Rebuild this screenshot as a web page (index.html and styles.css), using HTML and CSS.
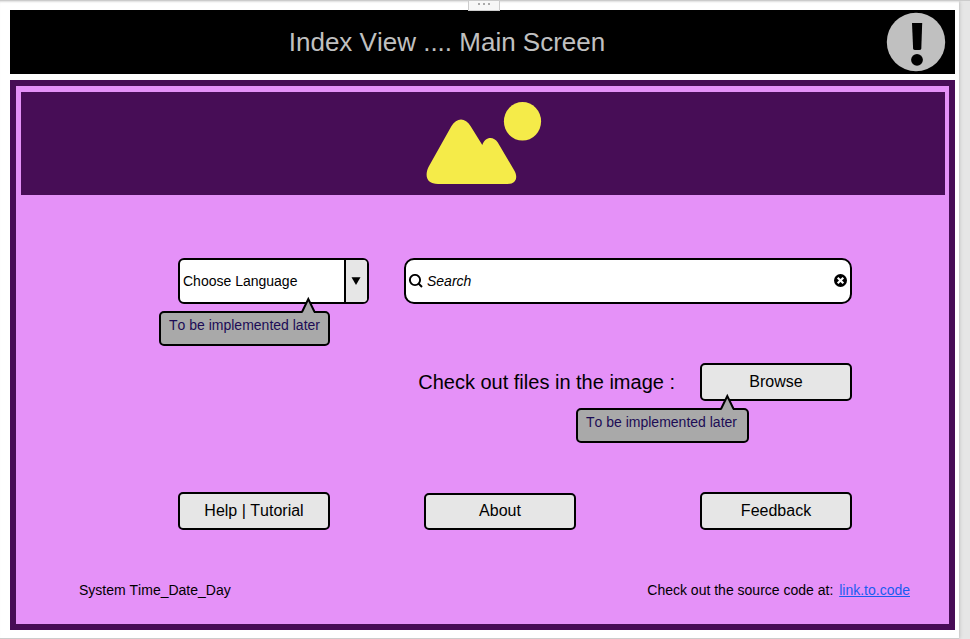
FILE: index.html
```html
<!DOCTYPE html>
<html lang="en">
<head>
<meta charset="utf-8">
<title>Index View</title>
<link rel="stylesheet" href="styles.css">
</head>
<body>
<div class="canvas">
  <div class="handle"><i></i><i></i><i></i></div>
  <header class="titlebar">
    <h1>Index View .... Main Screen</h1>
    <svg class="alert" viewBox="0 0 60 60"><circle cx="30" cy="30" r="29.200" fill="#c0c0c0"/><path d="M26 11h10.200l-.9 25.500q-.2 1.500-2 1.500h-4.200q-1.800 0-2-1.500z"/><circle cx="31" cy="47.800" r="5.900"/></svg>
  </header>
  <main class="panel">
    <div class="hero">
      <svg class="picture" viewBox="0 0 116 84" fill="#f5eb49"><ellipse cx="96.500" cy="19.300" rx="18.600" ry="19.300"/><path d="M25.500 24C30.500 15.300 39.500 15.300 44.500 24L56.300 43C59 34.500 67.500 33.700 71.800 40.500L88 68C92.500 75 90 82 82 82H12C1.500 82 -2 75 2.500 65Z"/></svg>
    </div>
    <div class="row search-row">
      <div class="select">
        <span class="value">Choose Language</span>
        <span class="toggle"><svg width="10" height="8" viewBox="0 0 10 8"><path d="M.5.3h9L5 8z"/></svg></span>
        <div class="tip tip-language">To be implemented later<svg class="pointer" viewBox="0 0 16 17"><path d="M2.500 15L8.300 3 14 15V17H2.500Z" fill="#a9a9a9"/><path d="M2 16L8.300 3 14.600 16" fill="none" stroke="#000" stroke-width="2"/></svg></div>
      </div>
      <div class="search">
        <svg width="14" height="14" viewBox="0 0 14 14" fill="none" stroke="#000" stroke-width="1.900"><circle cx="6" cy="6" r="5.100"/><path d="M9.500 9.500L13 13"/></svg>
        <span class="placeholder">Search</span>
        <svg width="13" height="13" viewBox="0 0 13 13"><circle cx="6.500" cy="6.500" r="6.500"/><path d="M3.700 3.700l5.600 5.600M9.300 3.700L3.700 9.300" stroke="#fff" stroke-width="2.100"/></svg>
      </div>
    </div>
    <div class="row browse-row">
      <span class="prompt">Check out files in the image :</span>
      <div class="button">Browse
        <div class="tip tip-browse">To be implemented later<svg class="pointer" viewBox="0 0 16 17"><path d="M2.500 15L8.300 3 14 15V17H2.500Z" fill="#a9a9a9"/><path d="M2 16L8.300 3 14.600 16" fill="none" stroke="#000" stroke-width="2"/></svg></div>
      </div>
    </div>
    <div class="row actions">
      <div class="button">Help | Tutorial</div>
      <div class="button about">About</div>
      <div class="button feedback">Feedback</div>
    </div>
    <footer class="footer">
      <span>System Time_Date_Day</span>
      <span class="source">Check out the source code at: <a href="#">link.to.code</a></span>
    </footer>
  </main>
</div>
</body>
</html>
```

FILE: styles.css
```css
* { box-sizing: border-box; }
body {
  margin: 0;
  height: 639px;
  overflow: hidden;
  background: #e6e6e6;
  font-family: "Liberation Sans", Arial, sans-serif;
  font-size: 14px;
  font-kerning: none;
  color: #000;
  border-top: 1px solid #ccc;
}
svg { display: block; flex: none; }
.canvas {
  position: relative;
  width: 959px;
  height: 638px;
  padding: 9px 4px 0 10px;
  background: #fff;
  border-bottom: 1px solid #ccc;
  box-shadow: 0 0 4px rgba(0, 0, 0, .25), inset 0 2px 2px -1px #ddd;
}
.handle {
  position: absolute;
  left: 468px;
  top: -1px;
  width: 32px;
  height: 11px;
  display: flex;
  justify-content: center;
  gap: 3px;
  padding-top: 3px;
  background: #f7f7f7;
  border: 1px solid #ccc;
  border-top: 0;
}
.handle i { width: 2px; height: 2px; background: #aaa; }
.titlebar {
  width: 945px;
  height: 64px;
  display: flex;
  align-items: center;
  background: #000;
}
.titlebar h1 {
  width: 876px;
  margin: 0;
  padding-right: 2px;
  text-align: center;
  font-size: 26px;
  font-weight: 400;
  color: #c0c0c0;
}
.alert { width: 60px; height: 60px; }
.panel {
  width: 945px;
  height: 550px;
  margin-top: 6px;
  border: 6px solid #470d56;
  background: #e591f8;
  display: flex;
  flex-direction: column;
}
.hero {
  flex: none;
  height: 103px;
  margin: 6px 4px 0 5px;
  padding-top: 10px;
  background: #470d56;
}
.picture { width: 116px; height: 84px; margin-left: 405px; }
.row {
  flex: none;
  display: flex;
  padding: 0 97px 0 162px;
}
.search-row { margin-top: 63px; gap: 35px; height: 46px; }
.select, .search, .button, .tip { border: 2px solid #000; }
.select {
  position: relative;
  width: 191px;
  display: flex;
  border-radius: 6px;
  background: #fff;
}
.value { flex: 1; padding-left: 3px; line-height: 42px; }
.toggle {
  width: 23px;
  display: flex;
  align-items: center;
  justify-content: center;
  padding-right: 1px;
  border-left: 2px solid #000;
  border-radius: 0 4px 4px 0;
  background: #e6e6e6;
}
.search {
  flex: 1;
  display: flex;
  align-items: center;
  padding: 0 3px;
  border-radius: 10px;
  background: #fff;
}
.search svg { margin-bottom: 1px; }
.placeholder { flex: 1; padding-left: 4px; font-style: italic; }
.browse-row {
  margin-top: 59px;
  height: 38px;
  align-items: center;
  justify-content: flex-end;
  gap: 25px;
}
.prompt { font-size: 20px; }
.button {
  position: relative;
  width: 152px;
  height: 38px;
  border-radius: 5px;
  background: #e6e6e6;
  font-size: 16px;
  line-height: 34px;
  text-align: center;
}
.tip {
  position: absolute;
  height: 35px;
  padding-left: 8px;
  border-radius: 5px;
  background: #a9a9a9;
  color: #1c0c55;
  font-size: 14px;
  line-height: 25px;
  text-align: left;
  white-space: nowrap;
}
.tip-language { left: -21px; top: 51px; width: 171px; }
.tip-browse { left: -126px; top: 43px; width: 173px; }
.pointer { position: absolute; top: -17px; width: 16px; height: 17px; }
.tip-language .pointer { left: 139px; }
.tip-browse .pointer { left: 141px; }
.actions { margin-top: 91px; height: 38px; align-items: flex-end; }
.about { height: 37px; line-height: 32px; margin-left: 94px; }
.feedback { margin-left: auto; }
.footer {
  display: flex;
  justify-content: space-between;
  margin-top: 52px;
  padding: 0 39px 0 63px;
  line-height: 16px;
}
.footer a { margin-left: 2px; color: #1a5cf0; }
```
